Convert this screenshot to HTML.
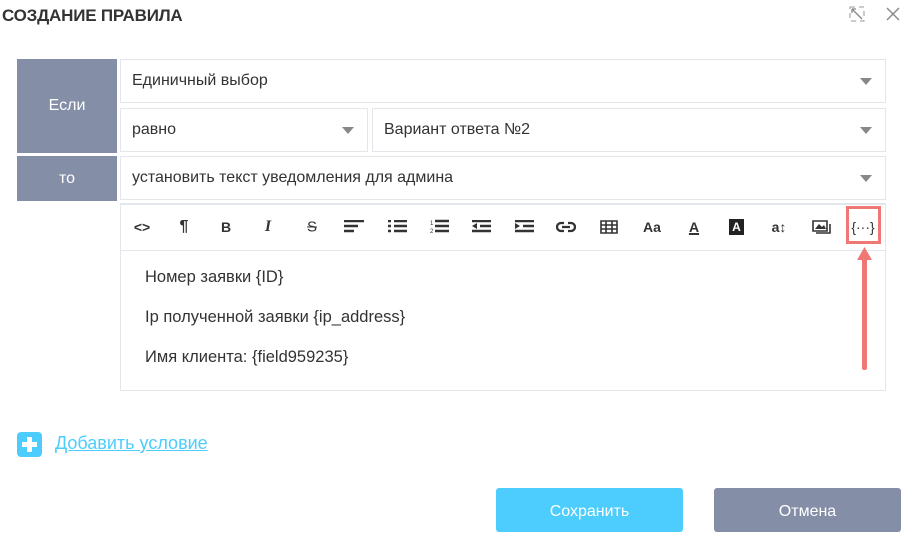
<!DOCTYPE html>
<html><head><meta charset="utf-8"><style>
*{box-sizing:border-box;margin:0;padding:0}
body{width:904px;height:536px;background:#fff;font-family:"Liberation Sans",sans-serif;color:#333;position:relative;overflow:hidden}
.a{position:absolute}
.lbl{background:#848ea6;color:#fff;font-size:16px;display:flex;align-items:center;justify-content:center}
.fld{border:1px solid #e3e6ea;background:#fff;font-size:16px;color:#333;padding-left:11px;display:flex;align-items:center}
.tri{position:absolute;right:13px;top:50%;margin-top:-3px;width:0;height:0;border-left:6px solid transparent;border-right:6px solid transparent;border-top:7px solid #888}
.ti{position:absolute;top:227px;transform:translate(-50%,-50%);font-size:14px;font-weight:bold;color:#333}
</style></head><body>
<div class="a" style="left:2px;top:6px;font-size:17px;font-weight:bold;color:#333;letter-spacing:-0.2px">СОЗДАНИЕ ПРАВИЛА</div>
<svg class="a" style="left:849px;top:6px" width="16" height="16"><path d="M1 1h14v14H1z" fill="none" stroke="#999" stroke-width="1" stroke-dasharray="5 4"/><path d="M3 3l10 10M3 3h4M3 3v4" stroke="#888" stroke-width="1.3" fill="none"/></svg>
<svg class="a" style="left:886px;top:7px" width="14" height="14"><path d="M1 1l12 12M13 1L1 13" stroke="#888" stroke-width="1.4"/></svg>

<div class="a lbl" style="left:17px;top:59px;width:100px;height:94px">Если</div>
<div class="a fld" style="left:120px;top:59px;width:766px;height:44px">Единичный выбор<span class="tri"></span></div>
<div class="a fld" style="left:120px;top:108px;width:248px;height:44px">равно<span class="tri"></span></div>
<div class="a fld" style="left:372px;top:108px;width:514px;height:44px">Вариант ответа №2<span class="tri"></span></div>
<div class="a lbl" style="left:17px;top:156px;width:100px;height:45px">то</div>
<div class="a fld" style="left:120px;top:156px;width:766px;height:44px">установить текст уведомления для админа<span class="tri"></span></div>

<div class="a" style="left:120px;top:203px;width:766px;height:188px;border:1px solid #e3e6ea;border-top:2px solid #e3e6ea"></div>
<div class="a" style="left:121px;top:250px;width:764px;height:1px;background:#e3e6ea"></div>

<div class="ti" style="left:142px">&lt;&gt;</div>
<div class="ti" style="left:184px;font-size:16px">¶</div>
<div class="ti" style="left:226px">B</div>
<div class="ti" style="left:268px;font-style:italic;font-family:'Liberation Serif',serif;font-size:16px">I</div>
<div class="ti" style="left:312px;text-decoration:line-through;font-weight:normal;font-size:15px">S</div>
<svg class="a" style="left:344px;top:220px" width="20" height="14"><path d="M0 1h20M0 6h14M0 11h10" stroke="#333" stroke-width="2.5"/></svg>
<svg class="a" style="left:388px;top:220px" width="19" height="14"><path d="M0 1h3M0 6h3M0 11h3M6 1h13M6 6h13M6 11h13" stroke="#333" stroke-width="2.5"/></svg>
<svg class="a" style="left:430px;top:219px" width="19" height="15"><text x="0" y="6" font-size="6" fill="#333">1</text><text x="0" y="14" font-size="6" fill="#333">2</text><path d="M5 2h14M5 7h14M5 12h14" stroke="#333" stroke-width="2.5"/></svg>
<svg class="a" style="left:472px;top:220px" width="19" height="14"><path d="M0 1h19M8 6h11M0 11h19" stroke="#333" stroke-width="2.5"/><path d="M0 6l5-3v6z" fill="#333"/></svg>
<svg class="a" style="left:515px;top:220px" width="19" height="14"><path d="M0 1h19M8 6h11M0 11h19" stroke="#333" stroke-width="2.5"/><path d="M5 6L0 3v6z" fill="#333"/></svg>
<svg class="a" style="left:556px;top:221px" width="20" height="12"><path d="M8 2H5a4 4 0 0 0 0 8h3M12 2h3a4 4 0 0 1 0 8h-3M6 6h8" stroke="#333" stroke-width="2.3" fill="none"/></svg>
<svg class="a" style="left:600px;top:220px" width="18" height="14"><path d="M1 1h16v12H1zM1 5h16M1 9h16M6 1v12M12 1v12" stroke="#333" stroke-width="1.6" fill="none"/></svg>
<div class="ti" style="left:652px">Aa</div>
<div class="ti" style="left:694px;text-decoration:underline;text-decoration-thickness:2px">A</div>
<div class="a" style="left:729px;top:219px;width:15px;height:16px;background:#222;color:#fff;font-size:12px;font-weight:bold;text-align:center;line-height:16px">A</div>
<div class="ti" style="left:779px">a↕</div>
<svg class="a" style="left:812px;top:219px" width="19" height="16"><path d="M1 2h14v10H1z" stroke="#333" stroke-width="1.6" fill="none"/><path d="M3 10l4-5 3 3 2-2 2 4z" fill="#333"/><path d="M4 14h14V5" stroke="#333" stroke-width="1.6" fill="none"/></svg>
<div class="a" style="left:846px;top:206px;width:35px;height:38px;border:3px solid #f07874"></div>
<div class="ti" style="left:863px;font-weight:normal;font-size:14px">{···}</div>
<div class="a" style="left:862px;top:258px;width:5px;height:112px;background:#f07874;border-radius:2px"></div>
<svg class="a" style="left:857px;top:247px" width="15" height="14"><path d="M7.5 0L15 13H0z" fill="#f07874"/></svg>

<div class="a" style="left:145px;top:267px;font-size:16.5px;line-height:20px">Номер заявки {ID}</div>
<div class="a" style="left:145px;top:307px;font-size:16.5px;line-height:20px">Ip полученной заявки {ip_address}</div>
<div class="a" style="left:145px;top:347px;font-size:16.5px;line-height:20px">Имя клиента: {field959235}</div>

<div class="a" style="left:17px;top:432px;width:25px;height:25px;background:#4ccdfd;border-radius:4px"></div>
<div class="a" style="left:27px;top:437px;width:5px;height:15px;background:#fff"></div>
<div class="a" style="left:22px;top:442px;width:15px;height:5px;background:#fff"></div>
<div class="a" style="left:55px;top:433px;font-size:18px;color:#4ccdfd;text-decoration:underline">Добавить условие</div>

<div class="a" style="left:496px;top:488px;width:187px;height:44px;background:#4ccdfd;border-radius:3px;color:#fff;font-size:16px;display:flex;align-items:center;justify-content:center;padding-top:3px">Сохранить</div>
<div class="a" style="left:714px;top:488px;width:187px;height:44px;background:#848ea6;border-radius:3px;color:#fff;font-size:16px;display:flex;align-items:center;justify-content:center;padding-top:3px">Отмена</div>
</body></html>
